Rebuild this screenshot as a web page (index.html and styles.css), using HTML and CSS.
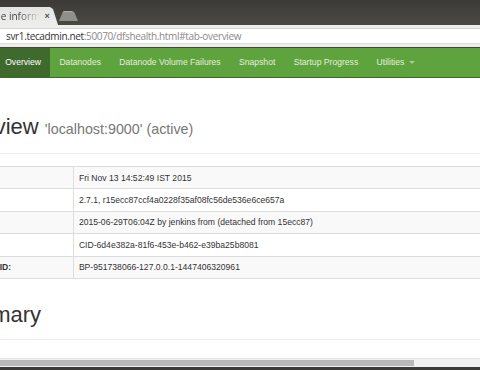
FILE: index.html
```html
<!DOCTYPE html>
<html lang="en">
<head>
    <meta charset="UTF-8">
    <title>Namenode information</title>
    <link rel="stylesheet" href="styles.css">
</head>
<body>
    <div class="window">
        <!-- title bar with tabs -->
        <div class="titlebar">
            <div class="tab">
                <span class="tab-title">Namenode information</span>
                <span class="tab-close">×</span>
            </div>
            <svg class="newtab" width="19" height="10" viewBox="0 0 19 10">
                <path d="M0 10 L3.5 1.6 Q4.2 0 6 0 L13 0 Q14.8 0 15.5 1.6 L19 10 Z" fill="#8f8f8c"/>
                <path d="M3.9 1.4 Q4.6 0.6 6 0.6 L13 0.6" stroke="#b5b5b2" stroke-width="0.8" fill="none"/>
            </svg>
        </div>

        <!-- address bar -->
        <div class="toolbar">
            <div class="url"><span class="host">svr1.tecadmin.net</span>:50070/dfshealth.html#tab-overview</div>
        </div>

        <div class="viewport">
            <nav class="navbar">
                <ul class="nav">
                    <li class="active"><a>Overview</a></li>
                    <li><a>Datanodes</a></li>
                    <li><a>Datanode Volume Failures</a></li>
                    <li><a>Snapshot</a></li>
                    <li><a>Startup Progress</a></li>
                    <li><a>Utilities <span class="caret"></span></a></li>
                </ul>
            </nav>

            <div class="content">
                <div class="page-header">
                    <h1>Overview <small>'localhost:9000' (active)</small></h1>
                </div>
                <table class="table">
                    <tr><th>Started:</th><td>Fri Nov 13 14:52:49 IST 2015</td></tr>
                    <tr><th>Version:</th><td>2.7.1, r15ecc87ccf4a0228f35af08fc56de536e6ce657a</td></tr>
                    <tr><th>Compiled:</th><td>2015-06-29T06:04Z by jenkins from (detached from 15ecc87)</td></tr>
                    <tr><th>Cluster ID:</th><td>CID-6d4e382a-81f6-453e-b462-e39ba25b8081</td></tr>
                    <tr><th>Block Pool ID:</th><td>BP-951738066-127.0.0.1-1447406320961</td></tr>
                </table>
                <div class="page-header summary">
                    <h1>Summary</h1>
                </div>
            </div>
        </div>

        <div class="hscroll"><div class="thumb"></div></div>
        <div class="frame-bottom"></div>
    </div>
</body>
</html>
```

FILE: styles.css
```css
* {
    box-sizing: border-box;
    margin: 0;
    padding: 0;
}
body {
    width: 480px;
    height: 370px;
    overflow: hidden;
    background: #3c3b37;
    font-family: 'Liberation Sans', Arial, sans-serif;
}
.window {
    display: flex;
    flex-direction: column;
    height: 370px;
}

/* title bar */
.titlebar {
    height: 25px;
    display: flex;
    align-items: flex-end;
    background: linear-gradient(#3b3a36, #4a4944);
}
.tab {
    width: 58px;
    height: 18px;
    display: flex;
    align-items: center;
    background: linear-gradient(#e4e4e2, #eeeeec);
    clip-path: polygon(0 0, 50px 0, 53px 2px, 58px 100%, 0 100%);
    overflow: hidden;
}
.tab-title {
    flex: none;
    margin-left: -45.5px;
    width: 87px;
    font-family: 'Open Sans', sans-serif;
    font-size: 10px;
    color: #3c3c3c;
    white-space: nowrap;
    overflow: hidden;
    -webkit-mask-image: linear-gradient(90deg, #000 72%, transparent 98%);
    mask-image: linear-gradient(90deg, #000 72%, transparent 98%);
}
.tab-close {
    margin-left: 3px;
    font-size: 9px;
    color: #555;
    font-weight: bold;
}
.newtab {
    margin: 0 0 4px 1px;
}

/* address bar */
.toolbar {
    height: 23px;
    padding: 3px 0;
    background: #eeeeec;
    border-bottom: 1px solid #45443f;
}
.url {
    height: 16px;
    background: #fff;
    border-top: 1px solid #d6d6d4;
    border-bottom: 1px solid #e0e0de;
    padding-left: 6px;
    font-family: 'Open Sans', sans-serif;
    font-size: 10px;
    line-height: 14px;
    letter-spacing: -0.35px;
    color: #8a8a8a;
    white-space: nowrap;
}
.host {
    color: #333;
}

/* page */
.viewport {
    flex: 1;
    background: #fff;
    overflow: hidden;
}
.navbar {
    height: 30px;
    background: #5fa33e;
    border-bottom: 1px solid #3f6a2c;
}
.nav {
    list-style: none;
    display: flex;
    margin-left: -4px;
}
.nav a {
    display: block;
    padding: 0 9.2px;
    height: 29px;
    line-height: 29px;
    font-size: 8.6px;
    color: #e4efdc;
    white-space: nowrap;
}
.nav .active a {
    background: #3f6a2e;
    color: #fff;
}
.caret {
    display: inline-block;
    width: 0;
    height: 0;
    margin-left: 2px;
    vertical-align: middle;
    border-top: 3px solid #a9cb95;
    border-left: 3px solid transparent;
    border-right: 3px solid transparent;
}

.content {
    margin-left: -53px;
    width: 620px;
    color: #333;
}
.page-header {
    margin: 37px 0 12px;
    padding-bottom: 6px;
    border-bottom: 1px solid #eee;
}
.page-header.summary {
    margin-top: 24px;
}
h1 {
    margin: 12px 0 6px;
    font-size: 22px;
    line-height: 24px;
    font-weight: normal;
    white-space: nowrap;
}
h1 small {
    font-size: 14.3px;
    color: #777;
}
.table {
    width: 100%;
    border-collapse: collapse;
    margin-bottom: 12px;
    font-size: 8.6px;
    line-height: 12px;
}
.table th, .table td {
    padding: 4.7px 4.9px;
    border: 1px solid #ddd;
    text-align: left;
    vertical-align: top;
}
.table th {
    width: 126px;
    font-weight: bold;
}
.table tr:nth-child(odd) {
    background: #f9f9f9;
}

/* horizontal scrollbar */
.hscroll {
    height: 9px;
    background: #f1f1f1;
    border-top: 1px solid #e4e4e4;
    padding: 1px 0;
}
.thumb {
    width: 414px;
    height: 6px;
    background: #b9b9b9;
}
.frame-bottom {
    height: 3px;
    background: #3c3b37;
}
```
